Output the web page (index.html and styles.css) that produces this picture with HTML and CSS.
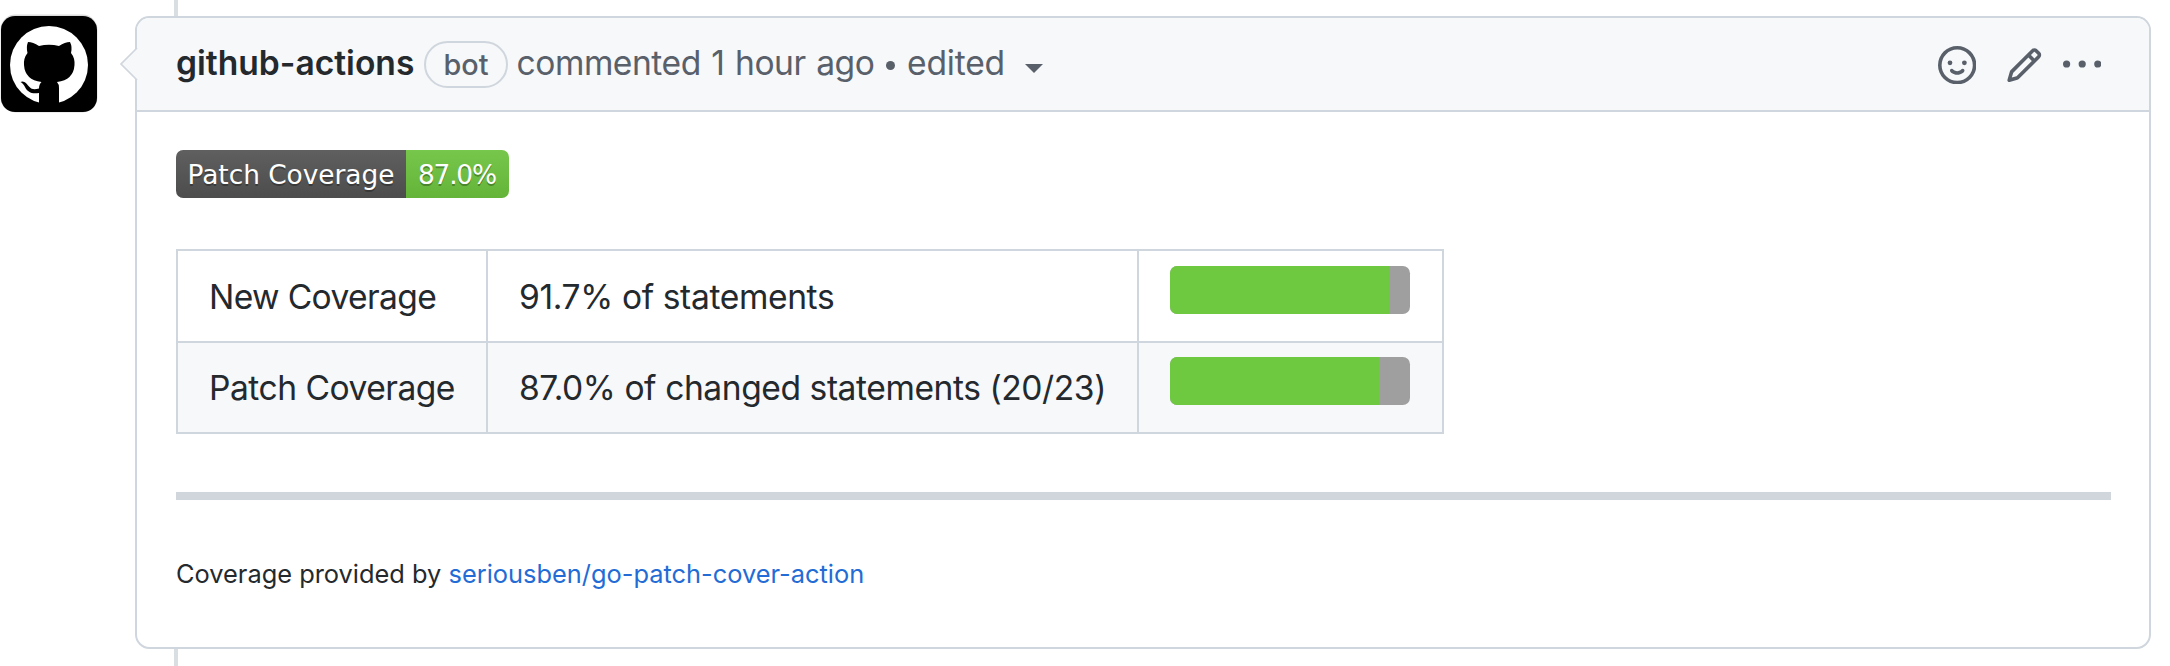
FILE: index.html
```html
<!DOCTYPE html>
<html lang="en">
<head>
<meta charset="utf-8">
<title>Patch coverage comment</title>
<link rel="stylesheet" href="styles.css">
</head>
<body>
<main class="timeline-item">
  <svg class="avatar" viewBox="0 0 98 99" aria-label="github-actions">
    <rect x="0.5" y="0.5" width="97" height="98" rx="15" fill="#dcdcdd"/>
    <rect x="1" y="2" width="96" height="96" rx="14" fill="#000"/>
    <circle cx="49" cy="51" r="39" fill="#fff"/>
    <path fill="#000" d="M28 28Q33 28 39 32Q49 29.500 59 32Q65 28 70 28Q72.500 33 71 39Q75 44 74.500 51Q73.500 66 57 68Q59 70 59 74V91H39V79C31 80 28 78 25.500 74C24 70.500 22 69 20.500 68C24 66 27 70 29 72.500C32 76 35 75.500 39 74.500Q39 70 41.500 68Q25 66 24 51Q23.500 44 27.500 39Q26 33 28 28Z"/>
  </svg>
  <article class="comment">
    <svg class="pointer" viewBox="0 0 20 36"><path d="M19 1L2 18L19 35" fill="#f6f8fa"/><path d="M18 2L2 18L18 34" fill="none" stroke="#d0d6dd" stroke-width="1.700"/></svg>
    <header class="comment-header">
      <div class="byline">
        <strong class="author">github-actions</strong>
        <span class="label">bot</span>
        <span class="time">commented 1 hour ago</span>
        <span class="dot"></span>
        <span class="edited">edited</span>
        <span class="caret"></span>
      </div>
      <div class="actions">
        <svg class="icon" viewBox="0 0 16 16"><path fill-rule="evenodd" d="M1.5 8a6.5 6.5 0 1113 0 6.5 6.5 0 01-13 0zM8 0a8 8 0 100 16A8 8 0 008 0zM5 8a1 1 0 100-2 1 1 0 000 2zm7-1a1 1 0 11-2 0 1 1 0 012 0zM5.320 9.636a.75.75 0 011.038.175l.007.009c.103.118.22.222.35.31.264.178.683.37 1.285.37.602 0 1.020-.192 1.285-.371.13-.088.247-.192.35-.31l.007-.008a.75.75 0 111.222.87c-.2.26-.45.49-.728.68-.474.32-1.180.629-2.127.629-.946 0-1.652-.308-2.126-.63a3.320 3.320 0 01-.73-.68.75.75 0 01.167-1.044z"/></svg>
        <svg class="icon icon-pencil" viewBox="0 0 16 16"><path fill-rule="evenodd" d="M11.013 1.427a1.750 1.750 0 012.474 0l1.086 1.086a1.750 1.750 0 010 2.474l-8.610 8.610c-.21.21-.47.364-.756.445l-3.251.93a.75.75 0 01-.927-.928l.929-3.250a1.750 1.750 0 01.445-.758l8.610-8.610zm1.414 1.060a.25.25 0 00-.354 0L10.811 3.750l1.439 1.440 1.263-1.263a.25.25 0 000-.354l-1.086-1.086zM11.189 6.250L9.750 4.810l-6.286 6.287a.25.25 0 00-.064.108l-.558 1.953 1.953-.558a.249.249 0 00.108-.064l6.286-6.286z"/></svg>
        <svg class="icon icon-kebab" viewBox="0 0 16 16"><circle cx="1.500" cy="7.500" r="1.500"/><circle cx="8" cy="7.500" r="1.500"/><circle cx="14.500" cy="7.500" r="1.500"/></svg>
      </div>
    </header>
    <div class="comment-body">
      <svg class="badge" viewBox="0 0 333 48">
        <defs>
          <linearGradient id="shade" x2="0" y2="1"><stop offset="0" stop-color="#bbb" stop-opacity=".1"/><stop offset="1" stop-opacity=".1"/></linearGradient>
          <clipPath id="round"><rect width="333" height="48" rx="7.200"/></clipPath>
        </defs>
        <g clip-path="url(#round)">
          <rect width="230" height="48" fill="#555"/>
          <rect x="230" width="103" height="48" fill="#6fc83f"/>
          <rect width="333" height="48" fill="url(#shade)"/>
        </g>
        <g class="badge-text badge-shadow" aria-hidden="true"><text x="11.500" y="36" textLength="207">Patch Coverage</text><text x="242" y="36" textLength="79">87.0%</text></g>
        <g class="badge-text"><text x="11.500" y="33.600" textLength="207">Patch Coverage</text><text x="242" y="33.600" textLength="79">87.0%</text></g>
      </svg>
      <table class="coverage">
        <tr><td class="name name-new">New Coverage</td><td class="value value-new">91.7% of statements</td><td class="meter"><div class="bar"><div class="fill" style="width:91.7%"></div></div></td></tr>
        <tr><td class="name">Patch Coverage</td><td class="value">87.0% of changed statements (20/23)</td><td class="meter"><div class="bar"><div class="fill" style="width:86.9%"></div></div></td></tr>
      </table>
      <hr class="rule">
      <p class="credit"><span class="credit-text">Coverage provided by </span><a class="link" href="#">seriousben/go-patch-cover-action</a></p>
    </div>
  </article>
</main>
</body>
</html>
```
FILE: styles.css
```css
* { box-sizing: border-box; }
body {
  margin: 0;
  background: #fff;
  color: #24292e;
  font: 33.6px/50px Inter, "Liberation Sans", sans-serif;
  overflow: hidden;
}
.timeline-item {
  position: relative;
  display: flex;
  align-items: flex-start;
  height: 666px;
  padding: 14px 19px 0 0;
}
.timeline-item::before {
  content: "";
  position: absolute;
  left: 174px;
  top: 0;
  width: 4px;
  height: 666px;
  background: #d9dee3;
}
.avatar { flex: none; width: 98px; height: 99px; margin-right: 37px; }
.comment {
  position: relative;
  flex: 1;
  height: 633px;
  margin-top: 2px;
  border: 2px solid #d0d6dd;
  border-radius: 14.4px;
  background: #fff;
}
.pointer { position: absolute; left: -18px; top: 28px; width: 20px; height: 36px; }
.comment-header {
  display: flex;
  justify-content: space-between;
  height: 94px;
  padding: 0 48px 0 39px;
  border-bottom: 2px solid #d0d6dd;
  border-radius: 12.4px 12.4px 0 0;
  background: #f6f8fa;
  color: #59606a;
}
.byline { display: flex; align-items: center; height: 92px; padding-bottom: 2px; white-space: nowrap; }
.author { color: #24292e; font-weight: 600; width: 248px; }
.label {
  width: 84px;
  height: 47px;
  margin: 3px 8.5px 0 0;
  border: 2px solid #d0d6dd;
  border-radius: 24px;
  font-size: 28.8px;
  font-weight: 500;
  line-height: 44px;
  text-align: center;
}
.time { width: 369.5px; letter-spacing: -0.45px; word-spacing: 1.5px; }
.dot { width: 9px; height: 9px; margin: 4px 12px 0 0; border-radius: 50%; background: #59606a; }
.edited { width: 118px; letter-spacing: -0.2px; }
.caret { margin-top: 10px; border: 9px solid transparent; border-top-color: #59606a; border-bottom: 0; }
.actions { display: flex; padding-top: 28px; }
.icon { width: 38.4px; height: 38.4px; fill: #59606a; }
.icon-pencil { margin-left: 29px; }
.icon-kebab { margin-left: 19px; }
.comment-body { padding: 38px 38px 0 39px; }
.badge { display: block; width: 333px; height: 48px; }
.badge-text { font-family: Verdana, "DejaVu Sans", sans-serif; font-size: 26.4px; fill: #fff; }
.badge-shadow { fill: #010101; fill-opacity: .3; }
.coverage { table-layout: fixed; width: 1268px; margin-top: 51px; border-collapse: collapse; }
.coverage td { height: 91px; padding: 1px 0 0 31px; border: 2px solid #d0d6dd; white-space: nowrap; }
.coverage tr:first-child td { height: 92px; }
.coverage tr:nth-child(2) { background: #f6f8fa; }
.coverage .name { width: 310px; letter-spacing: -0.5px; }
.coverage .name-new { letter-spacing: -0.62px; }
.coverage .value { width: 651px; letter-spacing: -0.43px; }
.coverage .value-new { letter-spacing: -0.37px; }
.coverage .meter { padding: 15px 0 0 31px; vertical-align: top; }
.coverage tr:nth-child(2) .meter { padding-top: 14px; }
.bar { width: 240px; height: 48px; border-radius: 7.2px; overflow: hidden; background: #9f9f9f; }
.fill { height: 100%; background: #6fc940; }
.rule { height: 8px; margin: 58px 0 0; border: 0; background: #d1d6dc; }
.credit { margin: 49px 0 0; font-size: 25.4px; white-space: pre; }
.link { color: #236bd5; text-decoration: none; }
```
